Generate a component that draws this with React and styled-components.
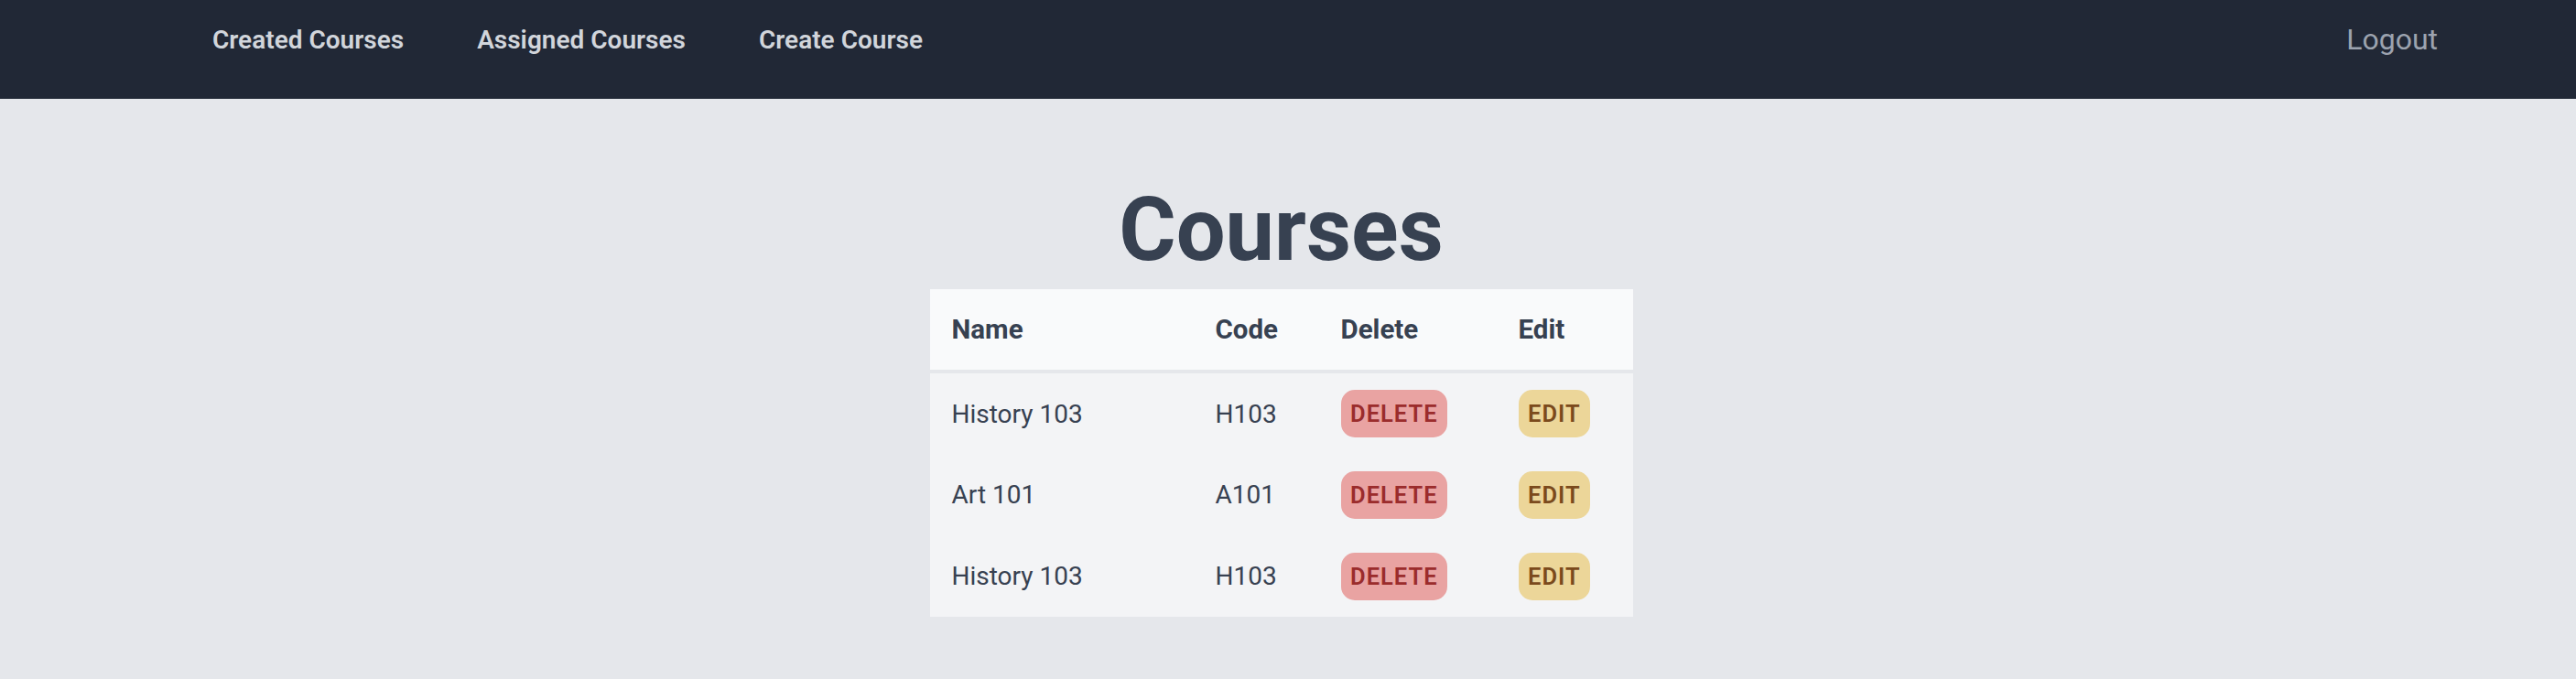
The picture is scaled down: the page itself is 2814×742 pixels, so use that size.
import React from "react";
import styled, { createGlobalStyle } from "styled-components";

const GlobalStyle = createGlobalStyle`
  html, body {
    margin: 0;
    padding: 0;
    background: #e5e7eb;
    font-family: Roboto, "Liberation Sans", Arial, sans-serif;
  }
  * { box-sizing: border-box; }
`;

const NavBar = styled.nav`
  height: 108px;
  background: #212836;
  display: flex;
  align-items: center;
  justify-content: space-between;
  padding: 0 151px 21px 232px;
`;

const NavLinks = styled.div`
  display: flex;
  align-items: center;
  gap: 80px;
`;

const NavLink = styled.a`
  color: #d1d5db;
  font-size: 28px;
  font-weight: 600;
  text-decoration: none;
  line-height: 1.2;
  cursor: pointer;
`;

const Logout = styled.a`
  color: #9ca3af;
  font-size: 32px;
  font-weight: 400;
  line-height: 1.2;
  cursor: pointer;
`;

const Main = styled.main`
  display: flex;
  flex-direction: column;
  align-items: center;
  padding: 95.5px 15px 40px 0;
`;

const Title = styled.h1`
  margin: 0 0 17px;
  font-size: 95.5px;
  line-height: 1;
  font-weight: 700;
  color: #374151;
`;

const Table = styled.div`
  width: 768px;
  display: flex;
  flex-direction: column;
`;

const Row = styled.div`
  display: grid;
  grid-template-columns: 288px 137px 194px 149px;
  height: ${(p) => (p.$head ? "88px" : "88.67px")};
  background: ${(p) => (p.$head ? "#f9fafb" : "#f3f4f6")};
  margin-bottom: ${(p) => (p.$head ? "4px" : "0")};
`;

const Cell = styled.div`
  display: flex;
  align-items: center;
  padding-left: 24px;
  color: #374151;
  font-size: ${(p) => (p.$head ? "29.5px" : "28px")};
  font-weight: ${(p) => (p.$head ? 700 : 400)};
  white-space: nowrap;
`;

const Badge = styled.button`
  height: 52px;
  padding: 0 10.5px;
  border: none;
  border-radius: 15px;
  font-family: inherit;
  font-size: 25.5px;
  font-weight: 600;
  letter-spacing: 0.04em;
  text-transform: uppercase;
  cursor: pointer;
  background: ${(p) => (p.$kind === "delete" ? "#e9a3a2" : "#ecd699")};
  color: ${(p) => (p.$kind === "delete" ? "#9b2c2c" : "#7b4a1c")};
`;

const courses = [
  { name: "History 103", code: "H103" },
  { name: "Art 101", code: "A101" },
  { name: "History 103", code: "H103" },
];

export default function App() {
  return (
    <>
      <GlobalStyle />
      <NavBar>
        <NavLinks>
          <NavLink>Created Courses</NavLink>
          <NavLink>Assigned Courses</NavLink>
          <NavLink>Create Course</NavLink>
        </NavLinks>
        <Logout>Logout</Logout>
      </NavBar>
      <Main>
        <Title>Courses</Title>
        <Table>
          <Row $head>
            <Cell $head>Name</Cell>
            <Cell $head>Code</Cell>
            <Cell $head>Delete</Cell>
            <Cell $head>Edit</Cell>
          </Row>
          {courses.map((c, i) => (
            <Row key={i}>
              <Cell>{c.name}</Cell>
              <Cell>{c.code}</Cell>
              <Cell>
                <Badge $kind="delete">Delete</Badge>
              </Cell>
              <Cell>
                <Badge $kind="edit">Edit</Badge>
              </Cell>
            </Row>
          ))}
        </Table>
      </Main>
    </>
  );
}
